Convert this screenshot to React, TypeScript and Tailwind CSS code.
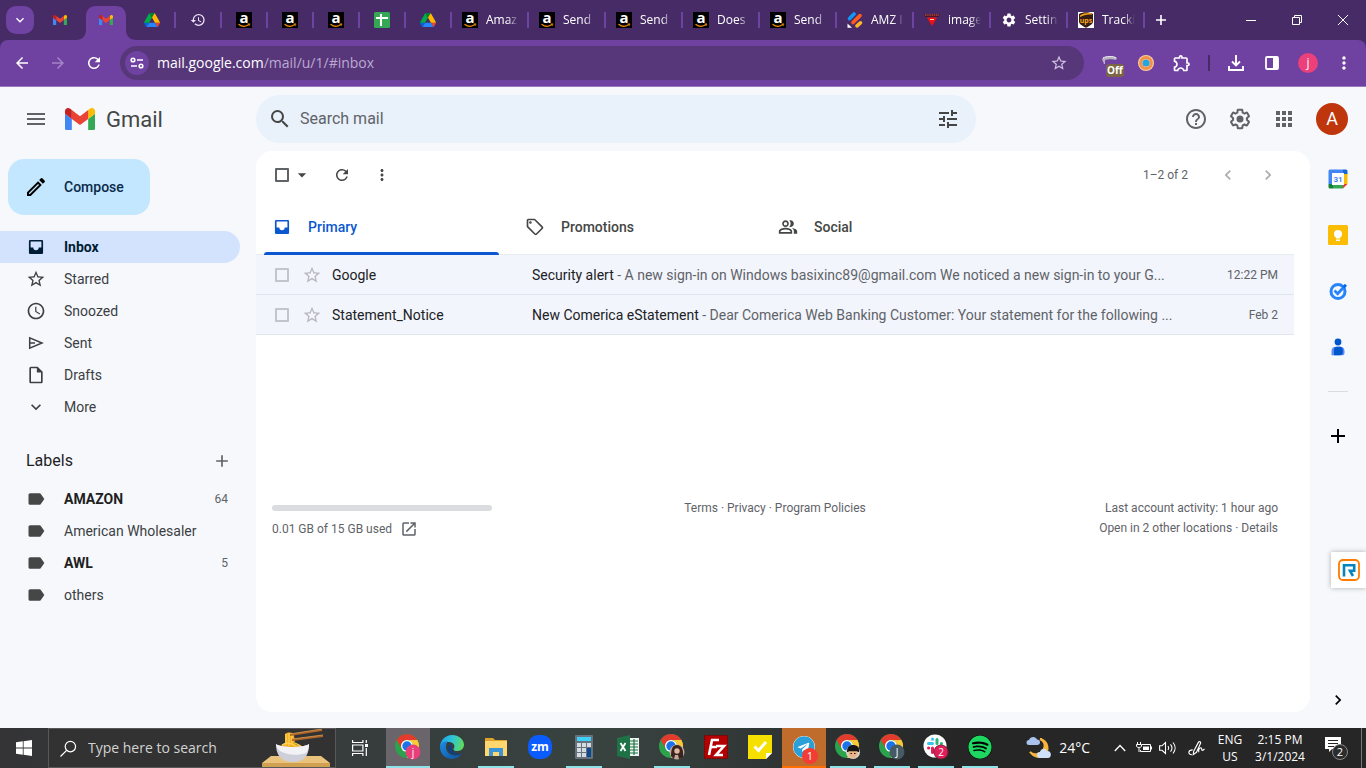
import type { ReactNode } from "react"
import {
  MdAccessTime,
  MdAdd,
  MdApps,
  MdArrowBack,
  MdArrowDropDown,
  MdArrowForward,
  MdChevronLeft,
  MdChevronRight,
  MdExpandMore,
  MdHelpOutline,
  MdHistory,
  MdMenu,
  MdMoreVert,
  MdOpenInNew,
  MdOutlineExtension,
  MdOutlineInsertDriveFile,
  MdOutlineModeEdit,
  MdOutlinePeopleAlt,
  MdOutlineSell,
  MdRefresh,
  MdSearch,
  MdSettings,
  MdStarBorder,
  MdTune,
} from "react-icons/md"
import { FaSpotify, FaTelegram } from "react-icons/fa"

/* ---------- logos ---------- */

function GmailLogo({ className }: { className?: string }) {
  return (
    <svg viewBox="52 42 88 66" className={className} aria-hidden="true">
      <path fill="#4285f4" d="M58 108h14V74L52 59v43c0 3.32 2.69 6 6 6" />
      <path fill="#34a853" d="M120 108h14c3.32 0 6-2.69 6-6V59l-20 15" />
      <path fill="#fbbc04" d="M120 48v26l20-15v-8c0-7.42-8.47-11.65-14.4-7.2" />
      <path fill="#ea4335" d="M72 74V48l24 18 24-18v26L96 92" />
      <path fill="#c5221f" d="M52 51v8l20 15V48l-5.6-4.2c-5.94-4.45-14.4-.22-14.4 7.2" />
    </svg>
  )
}

function DriveLogo() {
  return (
    <svg viewBox="0 0 87.3 78" className="w-4" aria-hidden="true">
      <path fill="#0066da" d="m6.6 66.85 3.85 6.65c.8 1.4 1.95 2.5 3.3 3.3l13.75-23.8h-27.5c0 1.55.4 3.1 1.2 4.5z" />
      <path fill="#00ac47" d="m43.65 25-13.75-23.8c-1.35.8-2.5 1.9-3.3 3.3l-25.4 44a9.06 9.06 0 0 0-1.2 4.5h27.5z" />
      <path fill="#ea4335" d="m73.55 76.8c1.35-.8 2.5-1.9 3.3-3.3l1.6-2.75 7.65-13.25c.8-1.4 1.2-2.95 1.2-4.5h-27.502l5.852 11.5z" />
      <path fill="#00832d" d="m43.65 25 13.75-23.8c-1.35-.8-2.9-1.2-4.5-1.2h-18.5c-1.6 0-3.15.45-4.5 1.2z" />
      <path fill="#2684fc" d="m59.8 53h-32.3l-13.75 23.8c1.35.8 2.9 1.2 4.5 1.2h50.8c1.6 0 3.15-.45 4.5-1.2z" />
      <path fill="#ffba00" d="m73.4 26.5-12.7-22c-.8-1.4-1.95-2.5-3.3-3.3l-13.75 23.8 16.15 28h27.45c0-1.55-.4-3.1-1.2-4.5z" />
    </svg>
  )
}

function AmazonLogo() {
  return (
    <svg viewBox="0 0 16 16" className="size-4 shrink-0 overflow-visible" aria-hidden="true">
      <rect width="16" height="16" fill="#000" />
      <text x="8" y="11" textAnchor="middle" fontSize="15" fontWeight="700" fontFamily="Open Sans, sans-serif" fill="#fff">
        a
      </text>
      <path d="M2.5 12.2c3.2 2.4 7.4 2.5 10.6.4" fill="none" stroke="#f79400" strokeWidth="1.2" />
      <path d="M11.6 12l2.3-.2-.6 2" fill="none" stroke="#f79400" strokeWidth=".8" />
    </svg>
  )
}

function SheetLogo() {
  return (
    <svg viewBox="0 0 16 16" className="size-4" aria-hidden="true">
      <rect width="16" height="16" rx="1.5" fill="#34a853" />
      <path d="M2 6h12M7 2v12" stroke="#fff" strokeWidth="2" />
    </svg>
  )
}

function StripesLogo() {
  return (
    <svg viewBox="0 0 16 16" className="size-4 shrink-0" aria-hidden="true">
      <g strokeWidth="3.6" strokeLinecap="round">
        <path d="M2.6 6.6 7 2" stroke="#1296f5" />
        <path d="M6 10.5 13 3.6" stroke="#ff5a1f" />
        <path d="M10 13.8l3.4-3" stroke="#fdb52a" />
      </g>
      <path d="M.5 11.5 5 15.8H.5z" fill="#fff" />
    </svg>
  )
}

function TriangleLogo() {
  return (
    <svg viewBox="0 0 16 16" className="size-4 shrink-0" aria-hidden="true">
      <path d="M0 2h16l-1.5 3h-13z" fill="#4b1430" />
      <path d="M1 3h14" stroke="#d9643a" strokeDasharray="1.5 .7" />
      <path d="M3 5.5h10L8 14z" fill="#f3110f" />
      <path d="M6 7.5h4" stroke="#fff" strokeWidth=".8" />
    </svg>
  )
}

function UpsLogo() {
  return (
    <svg viewBox="0 0 16 16" className="size-4 shrink-0 overflow-visible" aria-hidden="true">
      <rect width="16" height="16" fill="#fff" />
      <path d="M1 2C5-.2 11-.2 15 2v7.500c0 3-4 4.500-7 6.300-3-1.800-7-3.300-7-6.300z" fill="#351c15" />
      <path d="M2 3.500C6 .8 11 .6 14 1.400v1C10 2.300 6 2.800 2 5z" fill="#f9a51a" />
      <text x="8" y="11" textAnchor="middle" fontSize="7" fontWeight="700" fontFamily="Open Sans, sans-serif" fill="#f9a51a">
        ups
      </text>
    </svg>
  )
}

function ChromeLogo({ children }: { children?: ReactNode }) {
  return (
    <svg viewBox="0 0 26 26" className="size-[26px] overflow-visible" aria-hidden="true">
      <circle cx="12" cy="12" r="12" fill="#2ba24c" />
      <path d="M12 0a12 12 0 0 1 10.400 6H12a6 6 0 0 0-5.200 9L1.600 6A12 12 0 0 1 12 0z" fill="#e33b2e" />
      <path d="M22.400 6A12 12 0 0 1 12 24l5.200-9A6 6 0 0 0 12 6z" fill="#fcc934" />
      <circle cx="12" cy="12" r="6" fill="#fff" />
      <circle cx="12" cy="12" r="4.700" fill="#1a73e8" />
      {children}
    </svg>
  )
}

function ChromeBadge({ text, fill }: { text: string; fill: string }) {
  return (
    <>
      <circle cx="18" cy="18" r="7.500" fill={fill} />
      <text x="18" y="21.500" textAnchor="middle" fontSize="10" fontFamily="Open Sans, sans-serif" fill="#fff">
        {text}
      </text>
    </>
  )
}

function EdgeLogo() {
  return (
    <svg viewBox="0 0 24 24" className="size-6" aria-hidden="true">
      <defs>
        <linearGradient id="edge-top" x1="0" y1=".3" x2="1" y2=".5">
          <stop offset="0" stopColor="#1c9ee8" />
          <stop offset=".5" stopColor="#2fc6d8" />
          <stop offset="1" stopColor="#5fdc5a" />
        </linearGradient>
        <linearGradient id="edge-low" x1="0" y1="0" x2="1" y2="1">
          <stop offset="0" stopColor="#1b8de4" />
          <stop offset="1" stopColor="#0f4f9e" />
        </linearGradient>
      </defs>
      <path d="M0 11.500C.5 5 5.500 0 12 0c7 0 12 4.600 12 9.800 0 3.700-2.900 6.200-6.400 6.200-2.900 0-4.200-1-4.200-1.800 0-.7 1-1.100 1-3C14.400 8.600 11.600 7 8.600 7 4.500 7 1 9 0 11.500z" fill="url(#edge-top)" />
      <path d="M0 12c.3-4 4-5.800 8-5.500C5.500 8.500 5 14 8 17.500c3.300 3.600 9 4 14 .8C20 21.800 16.400 24 12 24 5.200 24 0 18.800 0 12z" fill="url(#edge-low)" />
      <path d="M9.800 9.500C7.200 12 7.600 16 11 18.400c3 2 7.600 2 11.400-.4-3 1.300-9 1-10.300-3.500-.7-2.300.4-3.600-2.300-5z" fill="#123f80" />
    </svg>
  )
}

/* ---------- browser ---------- */

type BrowserTab = { icon: ReactNode; name: string; active?: boolean; divider?: boolean }

const PINNED: BrowserTab[] = [
  { icon: <GmailLogo className="w-[14px]" />, name: "Gmail", divider: false },
  { icon: <GmailLogo className="w-[14px]" />, name: "Gmail inbox", active: true, divider: false },
  { icon: <DriveLogo />, name: "Drive" },
  { icon: <MdHistory className="size-4 text-[#eee6f7]" />, name: "History" },
  { icon: <AmazonLogo />, name: "Amazon" },
  { icon: <AmazonLogo />, name: "Amazon" },
  { icon: <AmazonLogo />, name: "Amazon" },
  { icon: <SheetLogo />, name: "Sheets" },
  { icon: <DriveLogo />, name: "Drive" },
]

const TABS: BrowserTab[] = [
  { icon: <AmazonLogo />, name: "Amaz" },
  { icon: <AmazonLogo />, name: "Send" },
  { icon: <AmazonLogo />, name: "Send" },
  { icon: <AmazonLogo />, name: "Does" },
  { icon: <AmazonLogo />, name: "Send" },
  { icon: <StripesLogo />, name: "AMZ I" },
  { icon: <TriangleLogo />, name: "image" },
  { icon: <MdSettings className="size-4 shrink-0 text-white" />, name: "Settin" },
  { icon: <UpsLogo />, name: "Tracki" },
]

function Divider() {
  return <span className="absolute right-[-1px] top-3 h-4 w-[2px] bg-[#6f43a2]" />
}

function TabStrip() {
  return (
    <div className="flex h-10 bg-[#472b66] text-white">
      <button aria-label="Search tabs" className="mt-[6px] mr-[3px] ml-[6px] flex size-7 items-center justify-center rounded-[10px] bg-[#6f43a2]">
        <MdExpandMore className="size-4" />
      </button>
      {PINNED.map((tab, i) => (
        <div key={i} className="relative flex w-[46px] justify-center">
          {tab.active && (
            <svg viewBox="0 0 60 34" className="absolute bottom-0 left-[-7px] h-[34px] w-[60px]" aria-hidden="true">
              <path d="M0 34c6 0 10-4 10-10V10C10 4 14 0 20 0h20c6 0 10 4 10 10v14c0 6 4 10 10 10z" fill="#6f41a0" />
            </svg>
          )}
          <button aria-label={tab.name} className="relative flex items-center">
            {tab.icon}
          </button>
          {tab.divider !== false && <Divider />}
        </div>
      ))}
      {TABS.map((tab, i) => (
        <div key={i} className="relative flex w-[77px]">
          <button className="flex items-center gap-2 pl-[11px] text-xs">
            {tab.icon}
            <span className="w-9 overflow-hidden text-left whitespace-nowrap [mask-image:linear-gradient(to_right,black_60%,transparent_92%)]">{tab.name}</span>
          </button>
          <Divider />
        </div>
      ))}
      <button aria-label="New tab" className="flex w-[34px] items-center justify-center">
        <svg viewBox="0 0 10 10" className="size-[10px]" aria-hidden="true">
          <path d="M5 0v10M0 5h10" stroke="#fff" strokeWidth="1.600" />
        </svg>
      </button>
      <div className="ml-auto flex">
        <button aria-label="Minimize" className="flex w-[46px] items-center justify-center">
          <svg viewBox="0 0 10 10" className="size-[10px]"><path d="M0 5.500h10" stroke="#fff" /></svg>
        </button>
        <button aria-label="Restore" className="flex w-[46px] items-center justify-center">
          <svg viewBox="0 0 10 10" className="size-[10px]"><path d="M.5 2.500h7v7h-7zM2.500 2V.5h7v7H8" fill="none" stroke="#fff" /></svg>
        </button>
        <button aria-label="Close" className="flex w-[46px] items-center justify-center">
          <svg viewBox="0 0 10 10" className="size-[10px]"><path d="M0 0l10 10M10 0 0 10" stroke="#fff" /></svg>
        </button>
      </div>
    </div>
  )
}

function ToolButton({ label, children }: { label: string; children: ReactNode }) {
  return (
    <button aria-label={label} className="flex h-9 w-9 shrink-0 items-center justify-center">
      {children}
    </button>
  )
}

function AddressBar() {
  return (
    <div className="bg-[#472b66]">
      <div className="flex h-[47px] items-center rounded-t-lg border-b border-[#9a78c0] bg-[#6f41a0] px-1 text-white">
        <ToolButton label="Back"><MdArrowBack className="size-[18px]" /></ToolButton>
        <ToolButton label="Forward"><MdArrowForward className="size-[18px] text-[#a485c6]" /></ToolButton>
        <ToolButton label="Reload"><MdRefresh className="size-[18px]" /></ToolButton>
        <div className="mx-2 flex h-[34px] flex-1 items-center rounded-full bg-[#57377a] pr-4 pl-[5px]">
          <button aria-label="Site information" className="flex size-6 items-center justify-center rounded-full bg-[#6f41a0]">
            <svg viewBox="0 0 14 12" className="w-[14px]" fill="none" stroke="#fff" strokeWidth="1.600" aria-hidden="true">
              <circle cx="3" cy="3" r="1.800" />
              <path d="M7 3h6M1 9h6" />
              <circle cx="11" cy="9" r="1.800" />
            </svg>
          </button>
          <a href="#inbox" className="ml-2 flex-1 text-sm text-[#bca9d2]">
            <span className="text-white">mail.google.com</span>/mail/u/1/#inbox
          </a>
          <MdStarBorder className="size-[18px] text-[#d0c2e0]" />
        </div>
        <ToolButton label="Extension, off">
          <span className="relative flex">
            <svg viewBox="0 0 20 18" className="w-5" aria-hidden="true">
              <path d="M2 5c2-3 13-3 15-1l-1 2C13 5 8 5 5 6v4H4z" fill="#b9b3bd" />
              <path d="M3 4c3-2 11-2 13 0" fill="none" stroke="#efeaf3" />
            </svg>
            <span className="absolute top-[10px] left-[6px] rounded-[3px] bg-[#7c6544] px-px text-[10px] leading-[13px] font-bold">Off</span>
          </span>
        </ToolButton>
        <ToolButton label="Colour extension">
          <svg viewBox="0 0 16 16" className="size-4" aria-hidden="true">
            <circle cx="8" cy="8" r="8" fill="#fbd0a0" />
            <circle cx="8" cy="8" r="5.400" fill="none" stroke="#f3904c" strokeWidth="3" />
            <circle cx="8" cy="8" r="3.600" fill="#24a5df" />
          </svg>
        </ToolButton>
        <ToolButton label="Extensions"><MdOutlineExtension className="size-5" /></ToolButton>
        <span className="mx-2 h-4 w-[2px] bg-[#472b66]" />
        <ToolButton label="Downloads">
          <svg viewBox="0 0 16 16" className="size-4" fill="none" stroke="#fff" strokeWidth="1.900" aria-hidden="true">
            <path d="M8 0v10M4 6.500l4 4 4-4M1 11v4h14v-4" />
          </svg>
        </ToolButton>
        <ToolButton label="Side panel">
          <svg viewBox="0 0 14 14" className="size-[14px]" aria-hidden="true">
            <rect x="1" y="1" width="12" height="12" rx="1" fill="none" stroke="#fff" strokeWidth="1.800" />
            <path d="M8 1h5v12H8z" fill="#fff" />
          </svg>
        </ToolButton>
        <ToolButton label="Profile">
          <span className="flex size-5 items-center justify-center rounded-full bg-[#ec407a] text-xs">j</span>
        </ToolButton>
        <ToolButton label="Browser menu"><MdMoreVert className="size-5" /></ToolButton>
      </div>
    </div>
  )
}

/* ---------- gmail ---------- */

function SettingsIcon() {
  return (
    <svg viewBox="0 0 24 24" className="size-6" fill="currentColor" aria-hidden="true">
      <path d="M13.85 22.25h-3.7c-.74 0-1.36-.54-1.45-1.27l-.27-1.89c-.27-.14-.53-.29-.79-.46l-1.8.72c-.7.26-1.47-.03-1.81-.65L2.2 15.53c-.35-.66-.2-1.44.36-1.88l1.53-1.19c-.01-.15-.02-.3-.02-.46 0-.15.01-.31.02-.46l-1.52-1.19c-.59-.45-.74-1.26-.37-1.88l1.85-3.19c.34-.62 1.11-.9 1.79-.63l1.81.73c.26-.17.52-.32.78-.46l.27-1.91c.09-.7.71-1.25 1.44-1.25h3.7c.74 0 1.36.54 1.45 1.27l.27 1.89c.27.14.53.29.79.46l1.8-.72c.71-.26 1.48.03 1.82.65l1.84 3.18c.36.66.2 1.44-.36 1.88l-1.52 1.19c.01.15.02.3.02.46s-.01.31-.02.46l1.52 1.19c.56.45.72 1.23.37 1.86l-1.86 3.22c-.34.62-1.11.9-1.8.63l-1.8-.72c-.26.17-.52.32-.78.46l-.27 1.91c-.1.68-.72 1.22-1.46 1.22zm-3.23-2h2.76l.37-2.55.53-.22c.44-.18.88-.44 1.34-.78l.45-.34 2.38.96 1.38-2.4-2.03-1.58.07-.56c.03-.26.06-.51.06-.78s-.03-.53-.06-.78l-.07-.56 2.03-1.58-1.39-2.4-2.39.96-.45-.35c-.42-.32-.87-.58-1.33-.77l-.52-.22-.37-2.55h-2.76l-.37 2.55-.53.21c-.44.19-.88.44-1.34.79l-.45.33-2.38-.95-1.39 2.39 2.03 1.58-.07.56a7 7 0 0 0-.06.79c0 .26.02.53.06.78l.07.56-2.03 1.58 1.38 2.4 2.39-.96.45.35c.43.33.86.58 1.33.77l.53.22.38 2.55z" />
      <circle cx="12" cy="12" r="3.500" />
    </svg>
  )
}

function InboxIcon() {
  return (
    <svg viewBox="0 0 24 24" className="size-5" fill="currentColor" aria-hidden="true">
      <path d="M19 3.500H5A1.500 1.500 0 0 0 3.500 5v14A1.500 1.500 0 0 0 5 20.500h14a1.500 1.500 0 0 0 1.500-1.500V5A1.500 1.500 0 0 0 19 3.500zm-.5 9.200h-3.300a3.200 3.200 0 0 1-6.400 0H5.500V5.500h13z" />
    </svg>
  )
}

function LabelIcon() {
  return (
    <svg viewBox="0 0 24 24" className="size-5 text-[#444746]" fill="currentColor" aria-hidden="true">
      <path d="M17.630 5.840A2 2 0 0 0 16 5H5a2 2 0 0 0-2 2v10a2 2 0 0 0 2 2h11a2 2 0 0 0 1.630-.84L22 12z" />
    </svg>
  )
}

function SentIcon() {
  return (
    <svg viewBox="0 0 20 20" className="size-5" fill="none" stroke="currentColor" strokeWidth="1.500" aria-hidden="true">
      <path d="M3.700 4.800v10.400L16 10zM4 10h5" />
    </svg>
  )
}

function GmailHeader() {
  return (
    <header className="flex h-16 items-center text-[#5f6368]">
      <div className="flex w-64 shrink-0 items-center pl-6">
        <button aria-label="Main menu"><MdMenu className="size-6" /></button>
        <a href="#inbox" className="ml-[17px] flex items-center gap-[11px] text-[22px] text-[#444746]">
          <GmailLogo className="w-[30px]" />
          Gmail
        </a>
      </div>
      <form className="flex h-12 max-w-[720px] flex-1 items-center rounded-full bg-[#e9f1fb] px-3 text-[#444746]">
        <button type="button" aria-label="Search"><MdSearch className="size-6" /></button>
        <input aria-label="Search mail" placeholder="Search mail" className="mx-2 min-w-0 flex-1 bg-transparent text-base outline-none placeholder:text-[#5f6368]" />
        <button type="button" aria-label="Search options" className="pr-1"><MdTune className="size-6" /></button>
      </form>
      <div className="ml-auto flex items-center gap-5 pr-[18px]">
        <button aria-label="Support"><MdHelpOutline className="size-6" /></button>
        <button aria-label="Settings"><SettingsIcon /></button>
        <button aria-label="Google apps"><MdApps className="size-6" /></button>
        <button aria-label="Account" className="flex size-8 items-center justify-center rounded-full bg-[#bf360c] text-lg text-white">A</button>
      </div>
    </header>
  )
}

const FOLDERS = [
  { name: "Inbox", icon: <InboxIcon />, active: true },
  { name: "Starred", icon: <MdStarBorder className="size-5" /> },
  { name: "Snoozed", icon: <MdAccessTime className="size-5" /> },
  { name: "Sent", icon: <SentIcon /> },
  { name: "Drafts", icon: <MdOutlineInsertDriveFile className="size-5" /> },
  { name: "More", icon: <MdExpandMore className="size-5" /> },
]

const LABELS = [
  { name: "AMAZON", count: 64 },
  { name: "American Wholesaler" },
  { name: "AWL", count: 5 },
  { name: "others" },
]

function Sidebar() {
  return (
    <nav className="w-64 shrink-0 pr-4 text-sm text-[#3c4043]">
      <button className="mt-2 ml-2 flex h-14 min-w-[142px] items-center gap-4 rounded-2xl bg-[#c2e7ff] pr-6 pl-4 font-medium text-[#0b2a4a]">
        <MdOutlineModeEdit className="size-6 text-black" />
        Compose
      </button>
      <ul className="mt-4">
        {FOLDERS.map((f) => (
          <li key={f.name}>
            <a
              href="#"
              className={
                f.active
                  ? "flex h-8 items-center gap-[18px] rounded-r-full bg-[#d3e3fd] pl-[26px] font-bold text-[#001d35]"
                  : "flex h-8 items-center gap-[18px] pl-[26px]"
              }
            >
              {f.icon}
              {f.name}
            </a>
          </li>
        ))}
      </ul>
      <div className="mt-5 flex h-9 items-center justify-between pr-2 pl-[26px] text-base text-[#1f1f1f]">
        <h2>Labels</h2>
        <button aria-label="Create new label"><MdAdd className="size-5 text-[#5f6368]" /></button>
      </div>
      <ul className="mt-1">
        {LABELS.map((l) => (
          <li key={l.name}>
            <a href="#" className="flex h-8 items-center gap-[18px] pr-3 pl-[26px]">
              <LabelIcon />
              <span className={l.count ? "flex-1 font-bold text-[#1f1f1f]" : "flex-1"}>{l.name}</span>
              {l.count && <span className="text-xs text-[#5f6368]">{l.count}</span>}
            </a>
          </li>
        ))}
      </ul>
    </nav>
  )
}

const MAILS = [
  {
    from: "Google",
    subject: "Security alert",
    snippet: "A new sign-in on Windows basixinc89@gmail.com We noticed a new sign-in to your G...",
    date: "12:22 PM",
  },
  {
    from: "Statement_Notice",
    subject: "New Comerica eStatement",
    snippet: "Dear Comerica Web Banking Customer: Your statement for the following ...",
    date: "Feb 2",
  },
]

function MailList() {
  return (
    <table className="w-full table-fixed border-t border-[#e8ebf0] text-left text-sm">
      <colgroup>
        <col className="w-[42px]" />
        <col className="w-[34px]" />
        <col className="w-[200px]" />
        <col />
        <col className="w-[100px]" />
      </colgroup>
      <tbody>
        {MAILS.map((m) => (
          <tr key={m.from} className="h-10 border-b border-[#dfe6f0] bg-[#f2f5fc]">
            <td>
              <input type="checkbox" aria-label={`Select ${m.from}`} className="ml-[19px] block size-[14px] appearance-none rounded-[1px] border-2 border-[#c2c5ca]" />
            </td>
            <td>
              <button aria-label={`Star ${m.from}`} className="ml-1 block"><MdStarBorder className="size-5 text-[#b6b9be]" /></button>
            </td>
            <td className="text-[#202124]">{m.from}</td>
            <td className="truncate text-[#5f6368]">
              <span className="text-[#202124]">{m.subject}</span> - {m.snippet}
            </td>
            <td className="pr-4 text-right text-xs text-[#5f6368]">{m.date}</td>
          </tr>
        ))}
      </tbody>
    </table>
  )
}

function MailPane() {
  return (
    <main className="mb-4 min-w-0 flex-1 rounded-2xl bg-white pr-4">
      <div className="flex h-12 items-center pl-[19px] text-[#444746]">
        <input type="checkbox" aria-label="Select all" className="size-[14px] appearance-none rounded-[1px] border-2 border-[#5f6368]" />
        <button aria-label="Select options" className="ml-[3px]"><MdArrowDropDown className="size-5" /></button>
        <button aria-label="Refresh" className="mr-[1px] ml-[21px]"><MdRefresh className="size-[18px]" /></button>
        <button aria-label="More" className="ml-[21px]"><MdMoreVert className="size-[18px]" /></button>
        <span className="mr-[30px] ml-auto text-xs text-[#5f6368]">1–2 of 2</span>
        <button aria-label="Newer" className="mr-5 text-[#a9acb0]"><MdChevronLeft className="size-5" /></button>
        <button aria-label="Older" className="mr-4 text-[#a9acb0]"><MdChevronRight className="size-5" /></button>
      </div>
      <div className="flex h-[55px] text-sm font-medium text-[#444746]">
        <button className="relative flex w-[253px] items-center gap-4 pt-[1px] pl-4 text-[#0b57d0]">
          <InboxIcon />
          Primary
          <span className="absolute right-[10px] bottom-[-1px] left-2 h-[3px] rounded-t-[3px] bg-[#0b57d0]" />
        </button>
        <button className="flex w-[253px] items-center gap-4 pt-[1px] pl-4">
          <MdOutlineSell className="size-5" />
          Promotions
        </button>
        <button className="flex w-[253px] items-center gap-4 pt-[1px] pl-4">
          <MdOutlinePeopleAlt className="size-5" />
          Social
        </button>
      </div>
      <MailList />
      <footer className="mt-[163px] grid grid-cols-3 pr-4 pl-4 text-xs leading-5 text-[#5f6368]">
        <div className="pt-[7px]">
          <div className="h-[6px] w-[220px] rounded-full bg-[#dadce0]" />
          <p className="mt-2 flex items-center gap-2">
            0.01 GB of 15 GB used
            <MdOpenInNew className="size-[18px]" />
          </p>
        </div>
        <p className="text-center">Terms · Privacy · Program Policies</p>
        <p className="text-right">
          Last account activity: 1 hour ago
          <br />
          Open in 2 other locations · Details
        </p>
      </footer>
    </main>
  )
}

function SidePanel() {
  return (
    <aside className="flex w-14 shrink-0 flex-col items-center pt-[18px] pb-[18px]">
      <div className="flex flex-col gap-9">
        <button aria-label="Calendar">
          <svg viewBox="0 0 20 20" className="size-5" aria-hidden="true">
            <path d="M2 .5h13V5H5v10H.5V2A1.500 1.500 0 0 1 2 .5z" fill="#4285f4" />
            <path d="M15 .5h3A1.500 1.500 0 0 1 19.500 2v3H15z" fill="#1967d2" />
            <path d="M15 5h4.500v10H15z" fill="#fbbc04" />
            <path d="M5 15h10v4.500H5z" fill="#34a853" />
            <path d="M.5 15H5v4.500H2A1.500 1.500 0 0 1 .5 18z" fill="#188038" />
            <path d="M15 15h4.500L15 19.500z" fill="#ea4335" />
            <path d="M4 4h12v12H4z" fill="#fff" />
            <text x="10" y="13" textAnchor="middle" fontSize="8" fontWeight="700" fontFamily="Roboto, sans-serif" fill="#4285f4">31</text>
          </svg>
        </button>
        <button aria-label="Keep">
          <svg viewBox="0 0 20 20" className="size-5" aria-hidden="true">
            <rect width="20" height="20" rx="1.500" fill="#fbbc04" />
            <circle cx="10" cy="9" r="4" fill="#fff" />
            <path d="M8 12h4v1.500H8zM8 14.500h4V16H8z" fill="#fff" />
          </svg>
        </button>
        <button aria-label="Tasks">
          <svg viewBox="0 0 20 20" className="size-5" aria-hidden="true">
            <circle cx="10" cy="10.500" r="7" fill="none" stroke="#2684fc" strokeWidth="3" />
            <path d="M6.500 9.500l3.200 3.200 8-8.700" fill="none" stroke="#2684fc" strokeWidth="2.800" />
            <path d="M14.500 6 17 3l1.800 1.800-2.300 2.500z" fill="#0066da" />
          </svg>
        </button>
        <button aria-label="Contacts">
          <svg viewBox="0 0 20 20" className="size-5" aria-hidden="true">
            <circle cx="10" cy="5" r="3.400" fill="#0057cc" />
            <path d="M3.500 18.300V14A4.500 4.500 0 0 1 8 9.800h4a4.500 4.500 0 0 1 4.500 4.200v2c0 1.500-1 2.300-2.500 2.300z" fill="#5b8df6" />
            <path d="M6 18.300V13a3.300 3.300 0 0 1 3.300-3.200H12a3.300 3.300 0 0 1 2.800 3.200v2.300a3 3 0 0 1-3 3z" fill="#0057cc" />
          </svg>
        </button>
      </div>
      <span className="mt-[34px] h-px w-5 bg-[#dadce0]" />
      <button aria-label="Get add-ons" className="mt-8"><MdAdd className="size-6 text-black" /></button>
      <button aria-label="Hide side panel" className="mt-auto"><MdChevronRight className="size-5 text-black" /></button>
    </aside>
  )
}

function RingWidget() {
  return (
    <button aria-label="RingCentral" className="absolute top-[465px] right-0 flex h-9 w-[35px] items-center justify-center bg-white shadow-[0_0_5px_rgba(0,0,0,0.3)]">
      <svg viewBox="0 0 22 22" className="size-[22px]" aria-hidden="true">
        <rect x="1" y="1" width="20" height="20" rx="4" fill="#fff" stroke="#ff7a00" strokeWidth="1.800" />
        <path d="M6 17.500V6.200h10.200v5.600H12l3 5.200" fill="none" stroke="#0684bd" strokeWidth="2.600" />
      </svg>
    </button>
  )
}

/* ---------- windows taskbar ---------- */

function NoodleArt() {
  return (
    <svg viewBox="0 0 68 38" className="w-[68px] self-end" aria-hidden="true">
      <path d="M9 27h50l9 7H0z" fill="#e9c27c" />
      <path d="M0 34h68v4H0z" fill="#cf9f52" />
      <path d="M23 5c3-2 8-2 9 1l1 9 9 3H17l6-4z" fill="#f3ae22" />
      <path d="M24 5v11M27 4v13M30 5v10M33 14l6 3M20 16c4-3 9-2 14 1" stroke="#ffd35a" strokeWidth="1.200" fill="none" />
      <path d="M14 15c0 11 5 18 17 18s16-7 16-18c-5 4-28 4-33 0z" fill="#cfcfd9" />
      <path d="M14 15c5 4 28 4 33 0 0 4-1 7-3 9-8 3-20 2-26-2-3-2-4-5-4-7z" fill="#f1f1f6" />
      <path d="M28 6 60 1M30 11l31-4" stroke="#a9652a" strokeWidth="2" />
      <path d="M28 5 60 0M30 10l31-4" stroke="#dc9a4e" strokeWidth=".8" />
    </svg>
  )
}

type TaskApp = { name: string; icon: ReactNode; open?: boolean; state?: "active" | "alert" }

const APPS: TaskApp[] = [
  { name: "Chrome", state: "active", icon: <ChromeLogo><ChromeBadge text="j" fill="#e83e79" /></ChromeLogo> },
  { name: "Edge", icon: <EdgeLogo /> },
  {
    name: "File Explorer",
    open: true,
    icon: (
      <svg viewBox="0 0 24 24" className="size-6" aria-hidden="true">
        <path d="M1 3h8l2 2h12v6H1z" fill="#e0a32a" />
        <path d="M1 6h22v15H1z" fill="#ffd76e" />
        <path d="M5 21v-8h14v8h-4v-4H9v4z" fill="#3a94d6" />
      </svg>
    ),
  },
  {
    name: "Zoom",
    icon: (
      <svg viewBox="0 0 24 24" className="size-6 overflow-visible" aria-hidden="true">
        <rect width="24" height="24" rx="10" fill="#0b5cff" />
        <text x="12" y="16" textAnchor="middle" fontSize="12" fontWeight="700" fontFamily="Open Sans, sans-serif" fill="#fff">zm</text>
      </svg>
    ),
  },
  {
    name: "Calculator",
    open: true,
    icon: (
      <svg viewBox="0 0 24 24" className="size-6" aria-hidden="true">
        <rect x="3" width="18" height="24" rx="1" fill="#66727d" />
        <rect x="5" y="2" width="14" height="4" fill="#3fd0f5" />
        <path d="M5 8h4v4H5zM10 8h4v4h-4zM15 8h4v4h-4zM5 13h4v4H5zM10 13h4v4h-4zM5 18h4v4H5zM10 18h4v4h-4z" fill="#d6dce2" />
        <path d="M15 13h4v9h-4z" fill="#0b4a91" />
      </svg>
    ),
  },
  {
    name: "Excel",
    icon: (
      <svg viewBox="0 0 24 24" className="size-6" aria-hidden="true">
        <path d="M12 3h11v18H12z" fill="#eef4f0" />
        <path d="M14 6h8M14 9h8M14 12h8M14 15h8M14 18h8M18 4v16" stroke="#1f7246" strokeWidth="1.200" />
        <path d="M1 3 14 0v24L1 21z" fill="#1f7246" />
        <path d="m4.500 8 5 8M9.500 8l-5 8" stroke="#fff" strokeWidth="1.800" />
      </svg>
    ),
  },
  {
    name: "Chrome profile",
    open: true,
    icon: (
      <ChromeLogo>
        <circle cx="18" cy="18" r="7.500" fill="#c9a99a" />
        <path d="M12 22c0-8 2-11 6-11s7 4 6 12c-1 1-3 2-4 2l-1-4h-3l-1 4z" fill="#3a2420" />
        <circle cx="18" cy="17" r="2.700" fill="#e3b6a0" />
      </ChromeLogo>
    ),
  },
  {
    name: "FileZilla",
    icon: (
      <svg viewBox="0 0 24 24" className="size-6" aria-hidden="true">
        <rect x=".5" y=".5" width="23" height="23" fill="#b30000" stroke="#7d0000" strokeDasharray="1.500 1" />
        <path d="M5 20 8 5h7M7 12h6M12 11h8l-8 9h7" fill="none" stroke="#fff" strokeWidth="2.600" />
      </svg>
    ),
  },
  {
    name: "Tasks",
    icon: (
      <svg viewBox="0 0 24 24" className="size-6" aria-hidden="true">
        <path d="M0 0h24v18l-6 6H0z" fill="#f6e000" />
        <path d="M24 18h-6v6z" fill="#fff" />
        <path d="m6.500 11.500 4 4 7.500-8.500" fill="none" stroke="#fff" strokeWidth="3" />
      </svg>
    ),
  },
  {
    name: "Telegram",
    state: "alert",
    icon: (
      <span className="relative flex">
        <FaTelegram className="size-[22px] rounded-full bg-white text-[#2a9fd8]" />
        <span className="absolute top-3 left-[9px] flex size-4 items-center justify-center rounded-full bg-[#f23c34] text-[11px] text-white">1</span>
      </span>
    ),
  },
  {
    name: "Chrome guest",
    open: true,
    icon: (
      <ChromeLogo>
        <circle cx="18" cy="18" r="7" fill="#d8d2c8" />
        <path d="M12 18c0-5 2-7 6-7s7 2 6 7z" fill="#161414" />
        <path d="M13.500 17h9v3c0 2-2 4-4.500 4s-4.500-2-4.500-4z" fill="#e9b386" />
        <path d="M13.500 16.500h9" stroke="#161414" strokeWidth="1.500" />
        <path d="M15.500 19.500h1.500M19 19.500h1.500" stroke="#161414" />
      </ChromeLogo>
    ),
  },
  { name: "Chrome J", open: true, icon: <ChromeLogo><ChromeBadge text="J" fill="#455a64" /></ChromeLogo> },
  {
    name: "Slack",
    open: true,
    icon: (
      <svg viewBox="0 0 26 26" className="size-[26px] overflow-visible" aria-hidden="true">
        <circle cx="12" cy="12" r="11.500" fill="#fff" />
        <g strokeWidth="3" strokeLinecap="round">
          <path d="M5.500 9.500h4M9.500 5v.2" stroke="#36c5f0" />
          <path d="M14 5.500v4M18.500 9.500h-.2" stroke="#2eb67d" />
          <path d="M14 14h4.500M14 18.500v-.2" stroke="#ecb22e" />
          <path d="M9.500 14v4.500M5.500 14h.2" stroke="#e01e5a" />
        </g>
        <circle cx="18" cy="18" r="7" fill="#e01e5a" stroke="#7b2038" />
        <text x="18" y="21.500" textAnchor="middle" fontSize="10" fontFamily="Open Sans, sans-serif" fill="#fff">2</text>
      </svg>
    ),
  },
  { name: "Spotify", open: true, icon: <FaSpotify className="size-6 rounded-full bg-black text-[#1ed760]" /> },
]

function Taskbar() {
  return (
    <footer className="flex h-10 items-stretch bg-linear-to-r from-[#343436] via-[#384340] via-45% to-[#262627] to-70% text-white">
      <button aria-label="Start" className="flex w-12 shrink-0 items-center justify-center">
        <svg viewBox="0 0 16 16" className="size-4" fill="#fff" aria-hidden="true">
          <path d="M0 2.300 6.800 1.300v6.200H0zM7.600 1.200 16 0v7.500H7.600zM0 8.400h6.800v6.300L0 13.700zM7.600 8.400H16V16l-8.400-1.200z" />
        </svg>
      </button>
      <div className="flex w-72 shrink-0 items-center border border-[#58585a] bg-[#323233] pr-[5px] pl-[11px]">
        <svg viewBox="0 0 18 18" className="size-[17px] shrink-0" fill="none" stroke="#fff" strokeWidth="1.300" aria-hidden="true">
          <circle cx="11" cy="7" r="5.500" />
          <path d="m7 11-6.500 6.500" />
        </svg>
        <input aria-label="Type here to search" placeholder="Type here to search" className="ml-[11px] min-w-0 flex-1 bg-transparent text-sm outline-none placeholder:text-[#d2d2d2]" />
        <NoodleArt />
      </div>
      <button aria-label="Task view" className="mr-[2px] flex w-12 shrink-0 items-center justify-center">
        <svg viewBox="0 0 16 16" className="size-4" fill="none" stroke="#fff" strokeWidth="1.200" aria-hidden="true">
          <path d="M.6 0v2.500h10.300V0M.6 5h10.300v6H.6zM.6 16v-2.500h10.300V16M14.300 0v3M14.300 8v8" />
          <path d="M13 4h3v3h-3z" fill="#fff" stroke="none" />
        </svg>
      </button>
      {APPS.map((app) => (
        <button
          key={app.name}
          aria-label={app.name}
          className={
            app.state === "active"
              ? "relative flex w-11 items-center justify-center border-b-2 border-[#8fe3e8] bg-[#69656b]"
              : app.state === "alert"
                ? "relative flex w-11 items-center justify-center border-b-2 border-[#ff6f00] bg-[#bf6c2c]"
                : "relative flex w-11 items-center justify-center border-b-2 border-transparent"
          }
        >
          {app.icon}
          {app.open && <span className="absolute inset-x-1 bottom-[-2px] h-[2px] bg-[#8fe3e8]" />}
        </button>
      ))}
      <div className="ml-auto flex items-center">
        <button className="mr-[18px] flex items-center gap-[7px] text-sm">
          <svg viewBox="0 0 26 24" className="w-[26px]" aria-hidden="true">
            <path d="M14 3c7 3 6 13-3 15-3 .5-6-1-7-2 3 4 9 7 14 3 6-5 4-14-4-16z" fill="#f7b43c" stroke="#f7b43c" strokeWidth="2" />
            <path d="M3 9a2.500 2.500 0 0 1 0-5c1-4 7-4 8-.5 4 0 4 5.500 0 5.500z" fill="#a9c3ee" />
            <path d="M14 22a3 3 0 0 1 0-6c1-4 6-4 7-1 5-.5 5 7 1 7z" fill="#cfe0fa" />
          </svg>
          24°C
        </button>
        <button aria-label="Show hidden icons" className="flex w-6 justify-center">
          <svg viewBox="0 0 12 8" className="w-3"><path d="m.8 7 5.200-5.500L11.200 7" fill="none" stroke="#fff" strokeWidth="1.300" /></svg>
        </button>
        <button aria-label="Battery" className="flex w-6 justify-center">
          <svg viewBox="0 0 16 12" className="w-4" fill="none" stroke="#fff" aria-hidden="true">
            <path d="M6 2.500h8.500v7H4.500V8M1.500 0v2M4.500 0v2M.5 2.500h5V4c0 2-5 2-5 0zM3 6v4" />
            <path d="M7 4.500h6v3.500H7z" fill="#fff" stroke="none" />
            <path d="M15.500 4.500v3" />
          </svg>
        </button>
        <button aria-label="Volume" className="flex w-6 justify-center">
          <svg viewBox="0 0 18 14" className="w-[18px]" fill="none" stroke="#fff" strokeWidth="1.100" aria-hidden="true">
            <path d="M.6 4.800H3L6.500 1.500v11L3 9.300H.6zM9 5c.9 1.200.9 2.800 0 4M11.500 3.300c1.800 2.200 1.800 5.200 0 7.400M14 1.500c2.800 3.300 2.800 7.700 0 11" />
          </svg>
        </button>
        <button aria-label="Pen" className="flex w-8 justify-center">
          <svg viewBox="0 0 18 18" className="w-[17px]" fill="none" stroke="#fff" strokeWidth="1.200" aria-hidden="true">
            <path d="M6 12 11 2.500c.8-1.500 3-.5 2.300 1L9 13l-3.500 2.500zM5 10.500c-5 0-5.500 5-1 5M11.500 13c-1-2.500 1-5.500 2.500-4.500s-1 4.500 3.500 1" />
          </svg>
        </button>
        <button className="w-9 text-center text-xs leading-[17px]">
          ENG
          <br />
          US
        </button>
        <button className="w-16 text-center text-xs leading-[17px] whitespace-nowrap">
          2:15 PM
          <br />
          3/1/2024
        </button>
        <button aria-label="Notifications" className="mr-px flex w-12 justify-center">
          <svg viewBox="0 0 24 24" className="size-6 overflow-visible" aria-hidden="true">
            <path d="M1 1h16v12H8l-3 3v-3H1z" fill="#fff" />
            <path d="M4 4.500h10M4 7.500h10M4 10.500h6" stroke="#262627" strokeWidth="1.100" />
            <circle cx="16" cy="16" r="7.500" fill="#2c2c2d" stroke="#8a8a8a" />
            <text x="16" y="20" textAnchor="middle" fontSize="11" fontFamily="Open Sans, sans-serif" fill="#fff">2</text>
          </svg>
        </button>
        <span className="mr-1 h-10 w-px bg-[#77777a]" />
      </div>
    </footer>
  )
}

export default function App() {
  return (
    <div className="flex min-h-screen flex-col font-['Open_Sans',sans-serif]">
      <TabStrip />
      <AddressBar />
      <div className="relative flex flex-1 flex-col bg-[#f6f8fc] font-[Roboto,sans-serif]">
        <GmailHeader />
        <div className="flex flex-1">
          <Sidebar />
          <MailPane />
          <SidePanel />
        </div>
        <RingWidget />
      </div>
      <Taskbar />
    </div>
  )
}
